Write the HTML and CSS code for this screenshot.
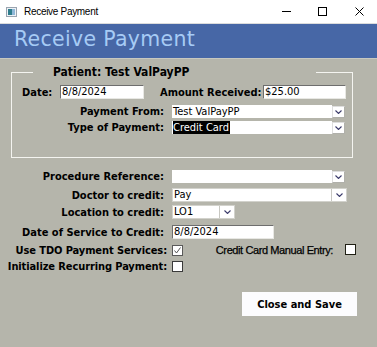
FILE: index.html
```html
<!DOCTYPE html>
<html>
<head>
<meta charset="utf-8">
<link rel="stylesheet" href="styles.css">
</head>
<body>
<div class="titlebar">
  <svg class="app-icon" width="11" height="10" viewBox="0 0 11 10">
    <rect x="0.5" y="0.5" width="10" height="9" fill="#eef2f6" stroke="#9aa4b0"/>
    <rect x="2" y="2" width="4" height="6" fill="#2f7d8c"/>
    <rect x="6" y="2" width="3" height="6" fill="#8fb8d8"/>
  </svg>
  <span class="title">Receive Payment</span>
  <svg class="ctl ctl-min" width="9" height="9" viewBox="0 0 9 9"><rect x="0" y="4" width="9" height="1" fill="#000"/></svg>
  <svg class="ctl ctl-max" width="9" height="9" viewBox="0 0 9 9"><rect x="0.5" y="0.5" width="8" height="8" fill="none" stroke="#000"/></svg>
  <svg class="ctl ctl-close" width="9" height="9" viewBox="0 0 9 9"><path d="M0.5 0.5 L8.5 8.5 M8.5 0.5 L0.5 8.5" stroke="#000" stroke-width="1" fill="none"/></svg>
</div>
<header class="banner">Receive Payment</header>
<main class="form">
  <fieldset class="patient">
    <legend class="patient-legend">Patient: Test ValPayPP</legend>
    <div class="row row-top">
      <span class="lbl lbl-date">Date:</span>
      <div class="input w-date">8/8/2024</div>
      <span class="lbl lbl-amt">Amount Received:</span>
      <div class="input w-amt">$25.00</div>
    </div>
    <div class="row row-combo">
      <span class="lbl flbl">Payment From:</span>
      <div class="combo">
        <div class="combo-field">Test ValPayPP</div>
        <div class="combo-btn"><svg width="7" height="4" viewBox="0 0 7 4"><polyline points="0.5,0.5 3.5,3.5 6.5,0.5" fill="none" stroke="#3b3b6b" stroke-width="1.1"/></svg></div>
      </div>
    </div>
    <div class="row row-combo row-tight">
      <span class="lbl flbl">Type of Payment:</span>
      <div class="combo">
        <div class="combo-field"><span class="sel">Credit Card</span></div>
        <div class="combo-btn"><svg width="7" height="4" viewBox="0 0 7 4"><polyline points="0.5,0.5 3.5,3.5 6.5,0.5" fill="none" stroke="#3b3b6b" stroke-width="1.1"/></svg></div>
      </div>
    </div>
  </fieldset>

  <section class="lower">
    <div class="lrow r-a">
      <span class="lbl llbl">Procedure Reference:</span>
      <div class="combo">
        <div class="combo-field"></div>
        <div class="combo-btn"><svg width="7" height="4" viewBox="0 0 7 4"><polyline points="0.5,0.5 3.5,3.5 6.5,0.5" fill="none" stroke="#3b3b6b" stroke-width="1.1"/></svg></div>
      </div>
    </div>
    <div class="lrow r-b">
      <span class="lbl llbl">Doctor to credit:</span>
      <div class="combo2 w-doc">
        <div class="combo2-txt">Pay</div>
        <div class="combo2-btn"><svg width="7" height="4" viewBox="0 0 7 4"><polyline points="0.5,0.5 3.5,3.5 6.5,0.5" fill="none" stroke="#3b3b6b" stroke-width="1.1"/></svg></div>
      </div>
    </div>
    <div class="lrow r-c">
      <span class="lbl llbl">Location to credit:</span>
      <div class="combo2 w-loc">
        <div class="combo2-txt">LO1</div>
        <div class="combo2-btn"><svg width="7" height="4" viewBox="0 0 7 4"><polyline points="0.5,0.5 3.5,3.5 6.5,0.5" fill="none" stroke="#3b3b6b" stroke-width="1.1"/></svg></div>
      </div>
    </div>
    <div class="lrow r-d">
      <span class="lbl llbl">Date of Service to Credit:</span>
      <div class="input w-dos">8/8/2024</div>
    </div>
    <div class="lrow r-e">
      <span class="lbl clbl">Use TDO Payment Services:</span>
      <div class="cb cb-gray"><svg width="9" height="9" viewBox="0 0 9 9"><polyline points="1.5,4.5 3.5,7 7.5,1.5" fill="none" stroke="#555" stroke-width="1"/></svg></div>
      <span class="cc-lbl">Credit Card Manual Entry:</span>
      <div class="cb cb-dark cb-cc"></div>
    </div>
    <div class="lrow r-f">
      <span class="lbl clbl">Initialize Recurring Payment:</span>
      <div class="cb cb-dark2"></div>
    </div>
    <div class="actions">
      <button class="btn">Close and Save</button>
    </div>
  </section>
</main>
</body>
</html>
```
FILE: styles.css
```css
html, body {
  margin: 0;
  padding: 0;
}
body {
  width: 377px;
  height: 347px;
  overflow: hidden;
  background: #b5b5ab;
  font-family: "DejaVu Sans Condensed", "DejaVu Sans", sans-serif;
  font-stretch: condensed;
  color: #000;
}

/* window title bar */
.titlebar {
  height: 23px;
  background: #fff;
  border-bottom: 1px solid #dcdcdc;
  display: flex;
  align-items: center;
  font-family: "Liberation Sans", Arial, sans-serif;
  font-stretch: normal;
  font-size: 10px;
  letter-spacing: -0.3px;
}
.app-icon { margin-left: 6px; }
.title { margin-left: 7px; }
.ctl-min { margin-left: auto; margin-right: 27px; }
.ctl-max { margin-right: 28px; }
.ctl-close { margin-right: 13px; }

/* blue banner */
.banner {
  height: 35px;
  box-sizing: border-box;
  background: #4767a6;
  border-bottom: 1px solid #c8c8c0;
  color: #a6cbf5;
  font-family: "DejaVu Sans", sans-serif;
  font-stretch: normal;
  font-size: 20.5px;
  letter-spacing: 0.3px;
  line-height: 23px;
  padding: 4px 0 0 14px;
}

/* labels */
.lbl {
  font-size: 11px;
  font-weight: bold;
  line-height: 13px;
  white-space: nowrap;
}

/* patient group */
.patient {
  margin: 6px 0 0 11px;
  padding: 6px 0 23px 0;
  width: 342px;
  box-sizing: border-box;
  border: 1px solid #f4f4f0;
  min-width: 0;
}
.patient-legend {
  margin-left: 21px;
  width: 283px;
  box-sizing: border-box;
  padding: 0 0 0 20px;
  font-size: 12px;
  font-weight: bold;
  line-height: 14px;
  white-space: nowrap;
}

.row {
  display: flex;
  align-items: center;
}
.row-top {
  height: 14px;
  padding-left: 10px;
}
.lbl-date { width: 38px; }
.lbl-amt { margin-left: 16px; width: 103px; }

.input {
  height: 14px;
  box-sizing: border-box;
  background: #fff;
  border-top: 1px solid #6e6e6e;
  border-left: 1px solid #6e6e6e;
  border-right: 1px solid #e8e8e4;
  border-bottom: 1px solid #e8e8e4;
  font-size: 11px;
  line-height: 12px;
  padding-left: 1px;
  white-space: nowrap;
}
.w-date { width: 84px; }
.w-amt { width: 83px; }

.row-combo {
  margin-top: 6px;
  height: 13px;
}
.row-tight { margin-top: 3px; }
.flbl {
  width: 152px;
  text-align: right;
  margin-right: 8px;
}

.combo {
  display: flex;
  height: 13px;
}
.combo-field {
  width: 160px;
  height: 13px;
  background: #fff;
  font-size: 11px;
  line-height: 13px;
  padding-left: 1px;
  box-sizing: border-box;
  white-space: nowrap;
}
.combo-btn {
  width: 13px;
  height: 12px;
  margin-top: 1px;
  box-sizing: border-box;
  background: #fff;
  border: 1px solid #dedede;
  border-right-color: #b0b0aa;
  border-bottom-color: #b0b0aa;
  display: flex;
  align-items: center;
  justify-content: center;
}
.sel {
  background: #000;
  color: #fff;
  padding: 0 1px 0 0;
}

/* lower section */
.lower { padding-top: 12px; }
.lrow {
  display: flex;
  align-items: center;
}
.llbl {
  width: 164px;
  text-align: right;
  margin-right: 8px;
}
.clbl {
  width: 167px;
  text-align: right;
  margin-right: 5px;
  letter-spacing: -0.1px;
}
.r-a { height: 13px; }
.r-b { height: 14px; margin-top: 5px; }
.r-c { height: 14px; margin-top: 3px; }
.r-d { height: 14px; margin-top: 6px; }
.r-e { height: 12px; margin-top: 5px; }
.r-f { height: 12px; margin-top: 4px; }

.combo2 {
  display: flex;
  height: 14px;
  box-sizing: border-box;
  background: #fff;
  border: 1px solid #d2d2cc;
}
.w-doc { width: 175px; }
.w-loc { width: 63px; }
.combo2-txt {
  flex: 1;
  font-size: 11px;
  line-height: 12px;
  padding-left: 1px;
  white-space: nowrap;
}
.combo2-btn {
  width: 15px;
  box-sizing: border-box;
  border-left: 1px solid #c8c8c2;
  display: flex;
  align-items: center;
  justify-content: center;
}
.w-dos { width: 102px; }

.cb {
  width: 11px;
  height: 11px;
  box-sizing: border-box;
  background: #fff;
  display: flex;
  align-items: center;
  justify-content: center;
}
.cb-gray { border: 1px solid #5a5a5a; }
.cb-dark { border: 1px solid #202014; }
.cb-dark2 { border: 1px solid #3a3a3a; }
.cc-lbl {
  margin-left: auto;
  margin-right: 12px;
  font-family: "Liberation Sans", Arial, sans-serif;
  font-stretch: normal;
  font-size: 11px;
  letter-spacing: -0.4px;
  line-height: 13px;
  color: #000;
  -webkit-text-stroke: 0.25px #000;
  white-space: nowrap;
}
.cb-cc {
  margin-right: 21px;
  margin-top: -2px;
}

.actions {
  display: flex;
  justify-content: flex-end;
  padding-right: 20px;
  margin-top: 20px;
}
.btn {
  width: 115px;
  height: 24px;
  border: none;
  background: #fcfcfe;
  font: inherit;
  font-stretch: condensed;
  font-size: 11px;
  font-weight: bold;
  color: #000;
  padding: 0;
}
```
